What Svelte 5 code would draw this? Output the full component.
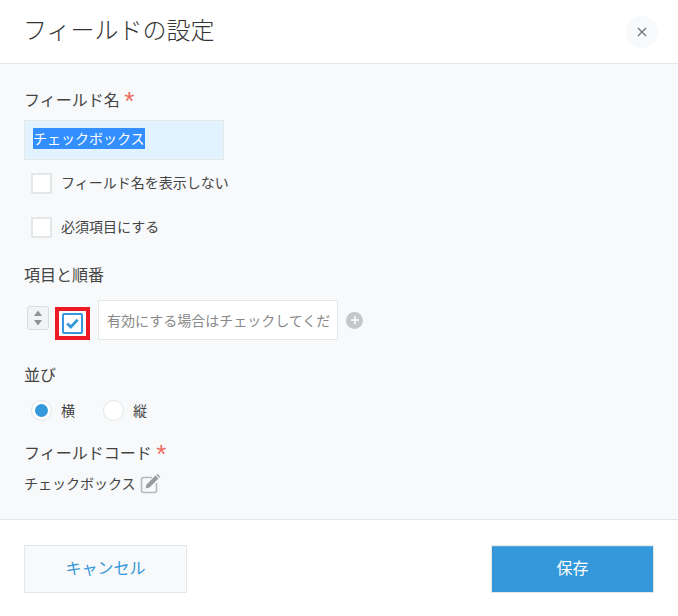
<script>
  const options = ['横', '縦'];
</script>

<div class="dialog">
  <header class="head">
    <h1>フィールドの設定</h1>
    <button class="close" aria-label="閉じる">
      <svg width="10" height="10" viewBox="0 0 10 10"><path d="M1 1l8 8M9 1l-8 8" stroke="#6f7577" stroke-width="1.2" fill="none"/></svg>
    </button>
  </header>

  <main class="body">
    <div class="label first">フィールド名 <span class="req">*</span></div>
    <div class="text-input"><span class="selected">チェックボックス</span></div>
    <div class="check-row one"><span class="box"></span><span class="txt">フィールド名を表示しない</span></div>
    <div class="check-row two"><span class="box"></span><span class="txt">必須項目にする</span></div>

    <div class="label items">項目と順番</div>
    <div class="option-row">
      <span class="sort">
        <svg width="10" height="18" viewBox="0 0 10 18"><path d="M5 1.5l4 5.5H1zM5 16.5l-4-5.5h8z" fill="#8f9597"/></svg>
      </span>
      <span class="mark">
        <span class="checked">
          <svg width="13" height="11" viewBox="0 0 13 11"><path d="M1.2 5.6l3.6 3.4 6.8-7.2" stroke="#3498db" stroke-width="2.7" fill="none"/></svg>
        </span>
      </span>
      <div class="option-input">有効にする場合はチェックしてくだ</div>
      <span class="add">
        <svg width="10" height="10" viewBox="0 0 10 10"><path d="M5 1v8M1 5h8" stroke="#fff" stroke-width="1.4"/></svg>
      </span>
    </div>

    <div class="label order">並び</div>
    <div class="radios">
      {#each options as o, i}
        <span class="radio-item">
          <span class="radio" class:on={i === 0}></span>{o}
        </span>
      {/each}
    </div>

    <div class="label code">フィールドコード <span class="req">*</span></div>
    <div class="code-row">
      チェックボックス
      <svg class="pencil" width="21" height="21" viewBox="0 0 21 21">
        <path d="M12 4.5H3.5a2 2 0 0 0-2 2v11a2 2 0 0 0 2 2h11a2 2 0 0 0 2-2V10" fill="none" stroke="#b4b8ba" stroke-width="1.6"/>
        <path d="M6.5 11.5L15.5 2.5l3 3-9 9-4 1z" fill="#979c9e"/>
        <path d="M16.3 1.7l1-1 3 3-1 1z" fill="#979c9e"/>
      </svg>
    </div>
  </main>

  <footer class="foot">
    <button class="btn cancel">キャンセル</button>
    <button class="btn save">保存</button>
  </footer>
</div>

<style>
  :global(body) {
    margin: 0;
    background: #fff;
  }
  .dialog {
    width: 678px;
    height: 616px;
    display: flex;
    flex-direction: column;
    font-family: "Noto Sans CJK JP", "Noto Sans", sans-serif;
    color: #444;
    overflow: hidden;
  }
  .head {
    height: 63px;
    flex: none;
    display: flex;
    align-items: flex-start;
    justify-content: space-between;
    padding: 0 20px 0 24px;
    border-bottom: 1px solid #e3e7e8;
    background: #fff;
  }
  h1 {
    margin: 11px 0 0 -1px;
    font-size: 24px;
    line-height: 36px;
    font-weight: 300;
    color: #333;
  }
  .close {
    width: 32px;
    height: 32px;
    margin-top: 16px;
    padding: 0;
    border: 0;
    border-radius: 50%;
    background: #f7f9fa;
    display: flex;
    align-items: center;
    justify-content: center;
  }
  .body {
    height: 456px;
    flex: none;
    box-sizing: border-box;
    background: #f7f9fa;
    padding: 0 24px;
    border-bottom: 1px solid #e3e7e8;
  }
  .label {
    font-size: 16px;
    line-height: 24px;
    font-weight: 400;
  }
  .req {
    display: inline-block;
    height: 16px;
    color: #ec6a5e;
    font-family: "Liberation Sans", sans-serif;
    font-size: 26px;
    line-height: 26px;
    vertical-align: top;
    margin-top: 1px;
    margin-left: 1px;
  }
  .first { margin-top: 23px; }
  .text-input {
    width: 200px;
    height: 40px;
    box-sizing: border-box;
    margin-top: 9px;
    padding: 7px 8px;
    background: #e2f2fe;
    border: 1px solid #e3e7e8;
    font-size: 14px;
    line-height: 21px;
  }
  .selected {
    display: inline-block;
    background: #338fff;
    color: #fff;
  }
  .check-row {
    display: flex;
    align-items: center;
    gap: 9px;
    padding-left: 7px;
    font-size: 14px;
    line-height: 20px;
    height: 22px;
  }
  .txt { padding-bottom: 2px; }
  .one { margin-top: 12px; }
  .two { margin-top: 22px; }
  .box {
    width: 17px;
    height: 17px;
    background: #fff;
    border: 2px solid #e3e7e8;
    border-radius: 1px;
    flex: none;
  }
  .items { margin-top: 24px; }
  .option-row {
    display: flex;
    align-items: center;
    margin-top: 14px;
    height: 40px;
  }
  .sort {
    box-sizing: border-box;
    width: 22px;
    height: 24px;
    margin: 0 0 4px 3px;
    background: #f1f3f4;
    border: 1px solid #d8dcdd;
    border-radius: 3px;
    display: flex;
    align-items: center;
    justify-content: center;
  }
  .mark {
    box-sizing: border-box;
    align-self: flex-start;
    width: 35px;
    height: 33px;
    margin: 7px 0 0 6px;
    padding: 2px 3px;
    background: #fff;
    border: 4px solid #ed1c24;
    display: flex;
  }
  .checked {
    width: 21px;
    height: 21px;
    box-sizing: border-box;
    border: 2px solid #3498db;
    border-radius: 2px;
    background: #fff;
    display: flex;
    align-items: center;
    justify-content: center;
  }
  .option-input {
    width: 240px;
    height: 40px;
    box-sizing: border-box;
    margin-left: 8px;
    padding: 0 0 0 8px;
    background: #fff;
    border: 1px solid #e3e7e8;
    color: #888;
    font-size: 14px;
    line-height: 38px;
    white-space: nowrap;
    overflow: hidden;
  }
  .add {
    width: 17px;
    height: 17px;
    margin-left: 8px;
    border-radius: 50%;
    background: #c4c8ca;
    display: flex;
    align-items: center;
    justify-content: center;
  }
  .order { margin-top: 22px; }
  .radios {
    display: flex;
    gap: 28px;
    margin-top: 13px;
    padding-left: 7px;
  }
  .radio-item {
    display: flex;
    align-items: center;
    gap: 9px;
    font-size: 14px;
    line-height: 22px;
  }
  .radio {
    width: 21px;
    height: 21px;
    box-sizing: border-box;
    border-radius: 50%;
    background: #fff;
    border: 1px solid #e3e7e8;
    position: relative;
  }
  .radio.on::after {
    content: "";
    position: absolute;
    inset: 3px;
    border-radius: 50%;
    background: #3498db;
  }
  .code { margin-top: 19px; }
  .code-row {
    display: flex;
    align-items: center;
    gap: 4px;
    margin-top: 7px;
    font-size: 14px;
    line-height: 24px;
  }
  .foot {
    flex: 1;
    display: flex;
    justify-content: space-between;
    align-items: flex-start;
    padding: 25px 24px 0;
    background: #fff;
  }
  .btn {
    width: 163px;
    height: 48px;
    box-sizing: border-box;
    font-family: inherit;
    font-size: 16px;
    padding: 0 0 4px;
  }
  .cancel {
    background: #f7f9fa;
    border: 1px solid #e3e7e8;
    color: #3498db;
  }
  .save {
    background: #3498db;
    border: 1px solid #e3e7e8;
    box-shadow: inset 0 1px 0 #5aa9e0;
    color: #fff;
  }
</style>
